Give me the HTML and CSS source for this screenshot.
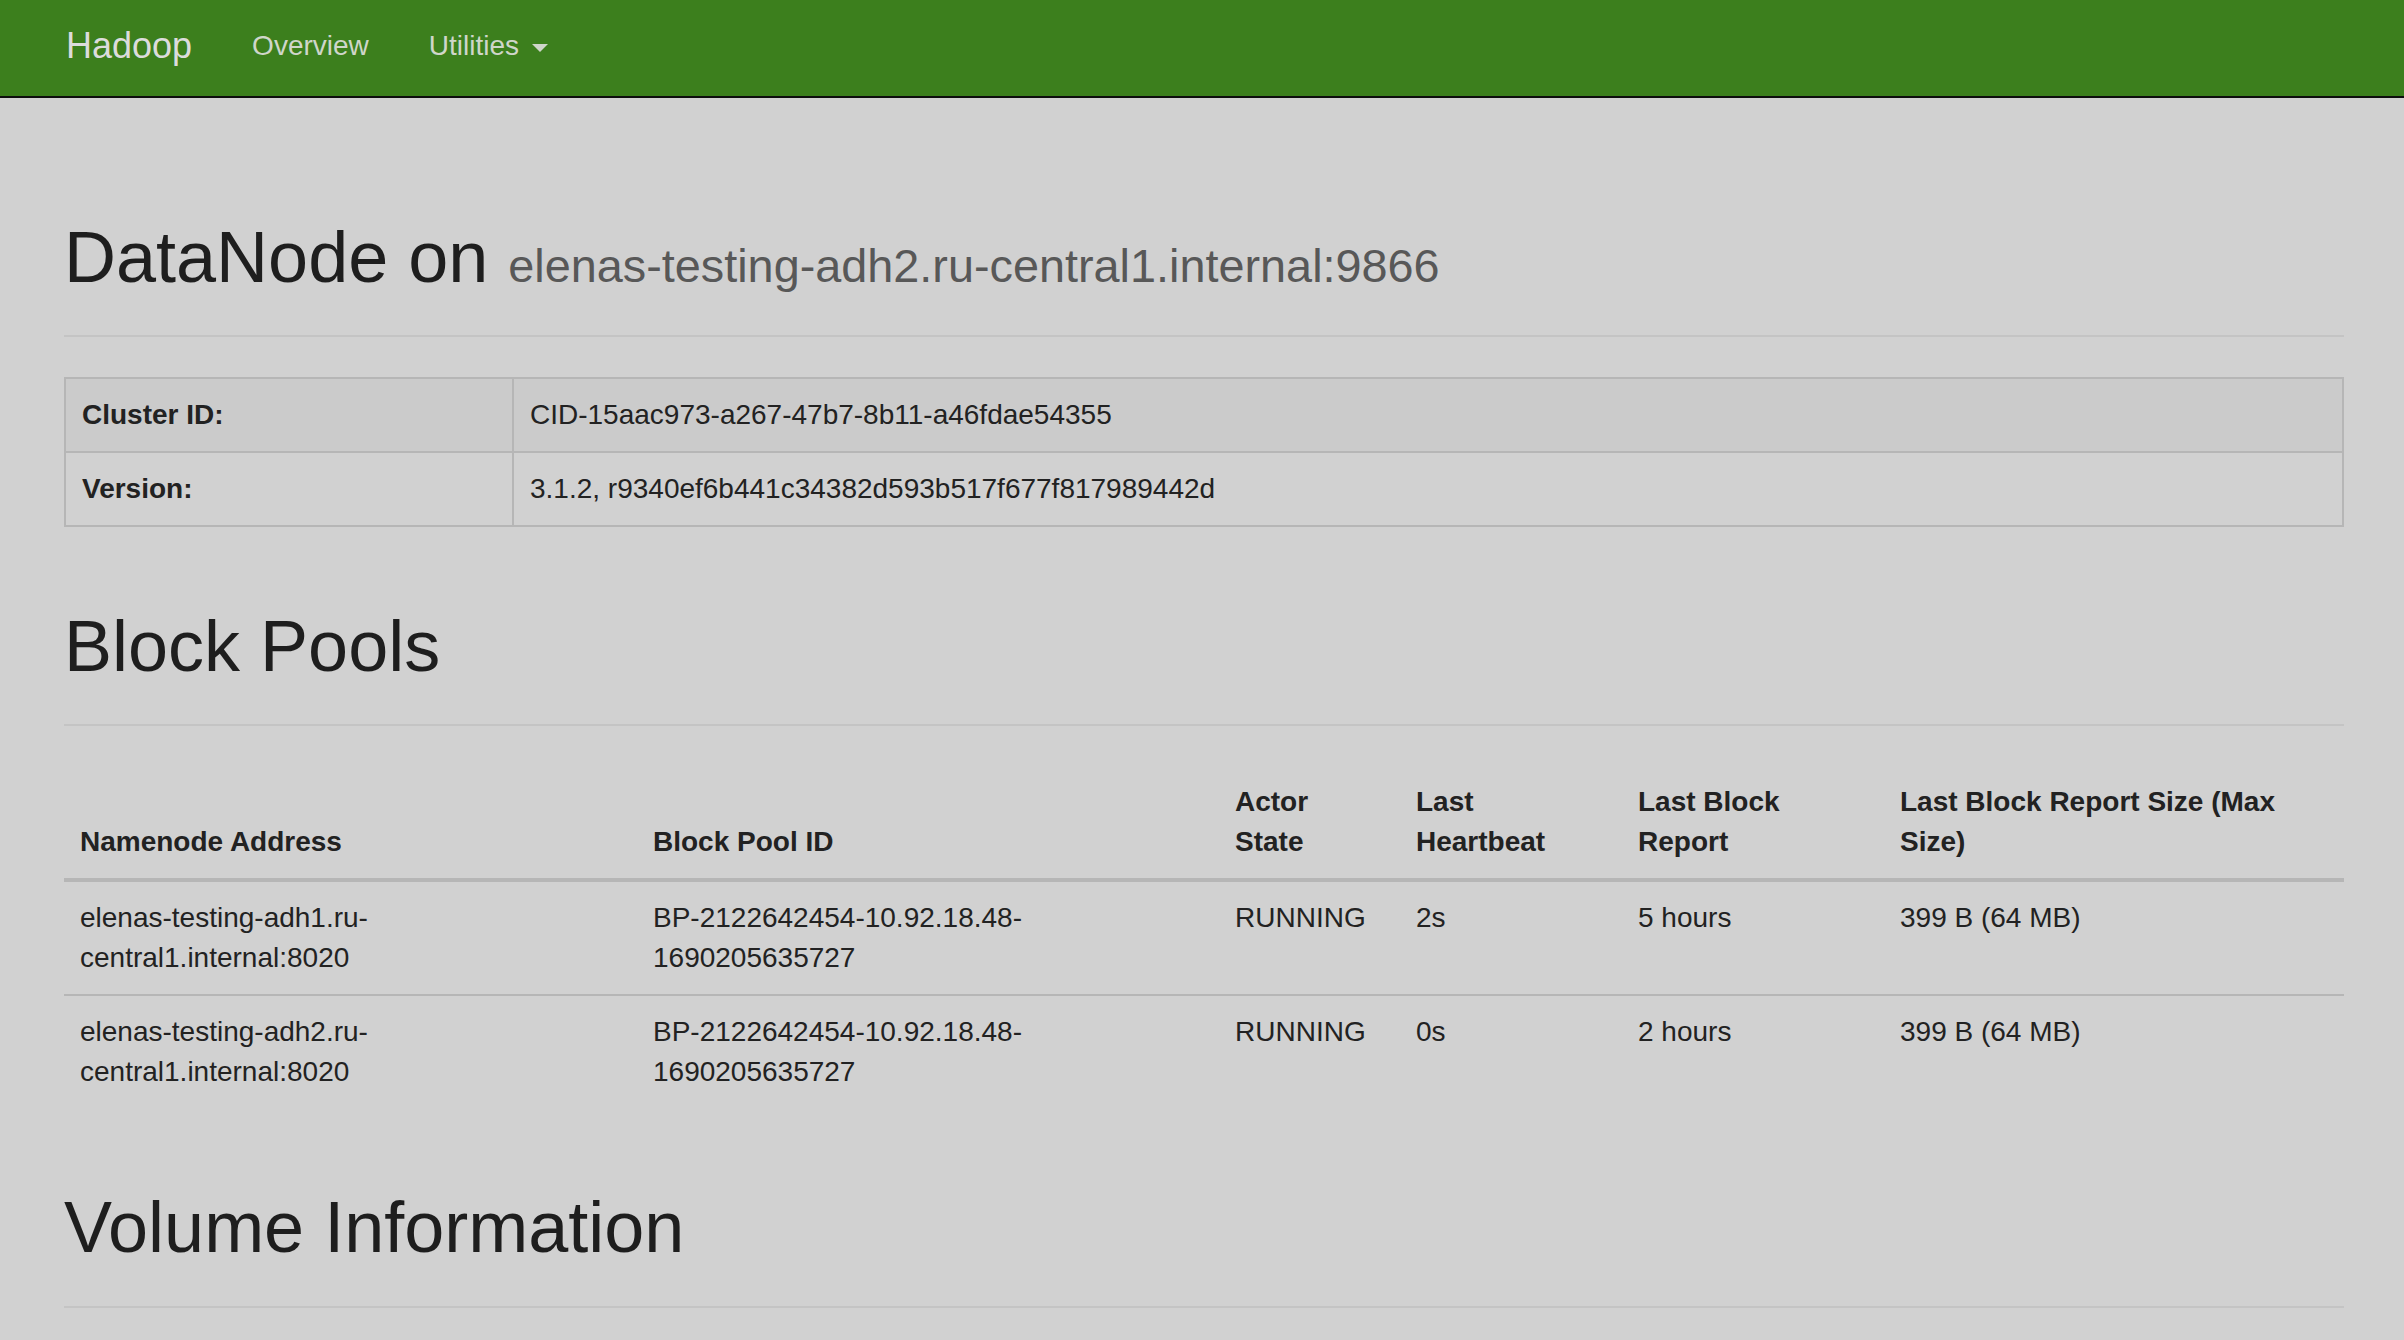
FILE: index.html
```html
<!DOCTYPE html>
<html lang="en">
<head>
<meta charset="utf-8">
<title>DataNode Information</title>
<link rel="stylesheet" href="styles.css">
</head>
<body>
<header class="navbar">
  <a class="brand">Hadoop</a>
  <a class="nav-link">Overview</a>
  <a class="nav-link">Utilities<span class="caret"></span></a>
</header>
<main class="container">
  <div class="page-header">
    <h1>DataNode on <small>elenas-testing-adh2.ru-central1.internal:9866</small></h1>
  </div>
  <table class="info-table">
    <tbody>
      <tr class="striped"><th>Cluster ID:</th><td>CID-15aac973-a267-47b7-8b11-a46fdae54355</td></tr>
      <tr><th>Version:</th><td>3.1.2, r9340ef6b441c34382d593b517f677f817989442d</td></tr>
    </tbody>
  </table>

  <div class="page-header">
    <h1>Block Pools</h1>
  </div>
  <table class="pool-table">
    <colgroup>
      <col class="c-addr"><col class="c-id"><col class="c-state"><col class="c-hb"><col class="c-rep"><col class="c-size">
    </colgroup>
    <thead>
      <tr>
        <th>Namenode Address</th>
        <th>Block Pool ID</th>
        <th>Actor State</th>
        <th>Last Heartbeat</th>
        <th>Last Block Report</th>
        <th>Last Block Report Size (Max Size)</th>
      </tr>
    </thead>
    <tbody>
      <tr>
        <td>elenas-testing-adh1.ru-<wbr>central1.internal:8020</td>
        <td>BP-2122642454-10.92.18.48-<wbr>1690205635727</td>
        <td>RUNNING</td>
        <td>2s</td>
        <td>5 hours</td>
        <td>399 B (64 MB)</td>
      </tr>
      <tr>
        <td>elenas-testing-adh2.ru-<wbr>central1.internal:8020</td>
        <td>BP-2122642454-10.92.18.48-<wbr>1690205635727</td>
        <td>RUNNING</td>
        <td>0s</td>
        <td>2 hours</td>
        <td>399 B (64 MB)</td>
      </tr>
    </tbody>
  </table>

  <div class="page-header">
    <h1>Volume Information</h1>
  </div>
</main>
</body>
</html>
```

FILE: styles.css
```css
html, body {
  margin: 0;
  padding: 0;
}
body {
  background: #d1d1d1;
  font-family: "Liberation Sans", Arial, Helvetica, sans-serif;
  font-size: 28px;
  line-height: 40px;
  color: #222222;
}
.navbar {
  box-sizing: border-box;
  height: 98px;
  background: #3c7f1d;
  border-bottom: 2px solid #0d0d0d;
  display: flex;
  align-items: center;
  padding: 0 0 5px 36px;
}
.brand {
  font-size: 36px;
  line-height: 40px;
  color: #dcdcdc;
  padding: 0 30px;
}
.nav-link {
  font-size: 28px;
  line-height: 40px;
  color: #cfd6ca;
  padding: 0 30px;
  display: flex;
  align-items: center;
}
.caret {
  display: inline-block;
  width: 0;
  height: 0;
  margin-left: 13px;
  margin-top: 4px;
  border-top: 8px solid #cfd6ca;
  border-left: 8px solid transparent;
  border-right: 8px solid transparent;
}
.container {
  padding: 40px 60px 0 64px;
}
.page-header {
  margin: 80px 0 40px;
  padding-bottom: 18px;
  border-bottom: 2px solid #c4c4c4;
}
.page-header h1 {
  margin: 0 0 20px;
  font-size: 72px;
  line-height: 79.2px;
  font-weight: normal;
  color: #1e1e1e;
}
.page-header h1 small {
  font-size: 65%;
  line-height: 1;
  color: #585858;
  font-weight: normal;
}
.info-table {
  width: 100%;
  border-collapse: separate;
  border-spacing: 0;
  border: 2px solid #b6b6b6;
  border-bottom: 0;
}
.info-table th,
.info-table td {
  padding: 16px;
  text-align: left;
  vertical-align: top;
  border-bottom: 2px solid #b6b6b6;
}
.info-table th {
  box-sizing: border-box;
  width: 448px;
  border-right: 2px solid #b6b6b6;
  font-weight: bold;
}
.info-table .striped th,
.info-table .striped td {
  background: #cbcbcb;
}
.pool-table {
  width: 100%;
  table-layout: fixed;
  border-collapse: separate;
  border-spacing: 0;
}
.c-addr { width: 573px; }
.c-id { width: 582px; }
.c-state { width: 181px; }
.c-hb { width: 222px; }
.c-rep { width: 262px; }
.c-size { width: 460px; }
.pool-table th,
.pool-table td {
  padding: 16px;
  text-align: left;
}
.pool-table th {
  vertical-align: bottom;
  font-weight: bold;
  border-bottom: 4px solid #b6b6b6;
}
.pool-table td {
  vertical-align: top;
}
.pool-table tbody tr + tr td {
  border-top: 2px solid #b6b6b6;
}
```
